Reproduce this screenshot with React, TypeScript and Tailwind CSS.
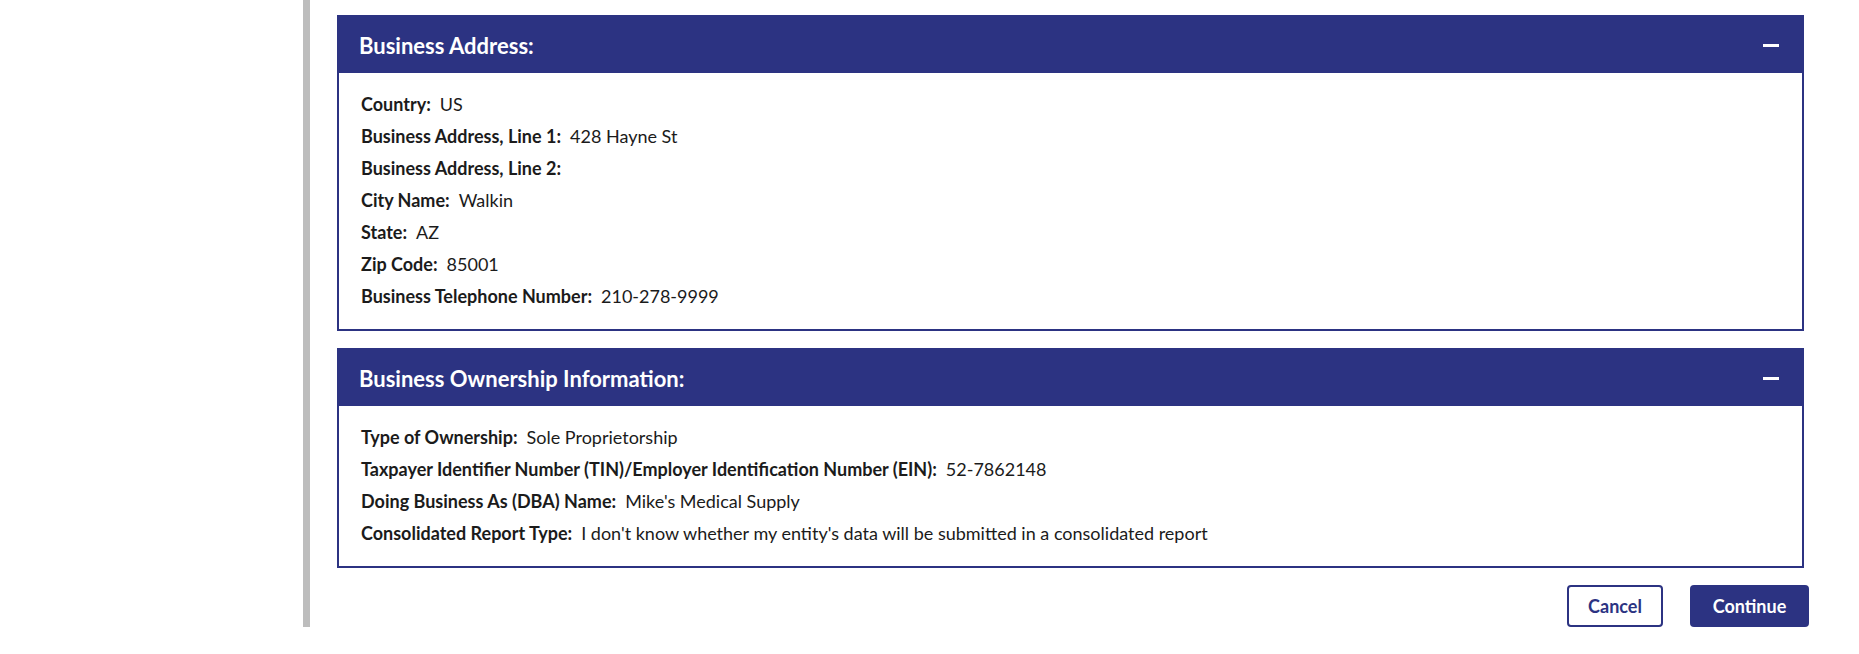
import React from "react"

const font = { fontFamily: "Lato, 'Open Sans', sans-serif" }

type Row = { label: string; value: string }

const addressRows: Row[] = [
  { label: "Country:", value: "US" },
  { label: "Business Address, Line 1:", value: "428 Hayne St" },
  { label: "Business Address, Line 2:", value: "" },
  { label: "City Name:", value: "Walkin" },
  { label: "State:", value: "AZ" },
  { label: "Zip Code:", value: "85001" },
  { label: "Business Telephone Number:", value: "210-278-9999" },
]

const ownershipRows: Row[] = [
  { label: "Type of Ownership:", value: "Sole Proprietorship" },
  {
    label: "Taxpayer Identifier Number (TIN)/Employer Identification Number (EIN):",
    value: "52-7862148",
  },
  { label: "Doing Business As (DBA) Name:", value: "Mike's Medical Supply" },
  {
    label: "Consolidated Report Type:",
    value: "I don't know whether my entity's data will be submitted in a consolidated report",
  },
]

function Panel({ title, rows }: { title: string; rows: Row[] }) {
  return (
    <section className="border-2 border-[#2c3382] bg-white">
      <div className="flex h-[56px] items-center justify-between bg-[#2c3382] pl-[20px] pr-[23px]">
        <h2 className="text-[22px] font-bold text-white">{title}</h2>
        <span className="block h-[3px] w-[16px] bg-white" />
      </div>
      <div className="px-[22px] pt-[15px] pb-[17px]">
        {rows.map((r) => (
          <p key={r.label} className="text-[18px] leading-[32px] text-[#1b1b1b]">
            <span className="font-bold">{r.label}</span>
            {r.value && <span className="ml-[9px]">{r.value}</span>}
          </p>
        ))}
      </div>
    </section>
  )
}

export default function App() {
  return (
    <div className="flex min-h-[654px] w-full items-start bg-white" style={font}>
      <div className="w-[303px] shrink-0" />
      <div className="flex h-[627px] flex-1 flex-col gap-[17px] border-l-[7px] border-[#bdbdbd] pt-[15px] pl-[27px] pr-[55px]">
        <Panel title="Business Address:" rows={addressRows} />
        <Panel title="Business Ownership Information:" rows={ownershipRows} />
        <div className="-mr-[5px] flex justify-end gap-[27px]">
          <button className="h-[42px] w-[96px] rounded-[4px] border-2 border-[#2c3382] bg-white text-[18px] font-bold text-[#2c3382]">
            Cancel
          </button>
          <button className="h-[42px] w-[119px] rounded-[4px] bg-[#2c3382] text-[18px] font-bold text-white">
            Continue
          </button>
        </div>
      </div>
    </div>
  )
}
